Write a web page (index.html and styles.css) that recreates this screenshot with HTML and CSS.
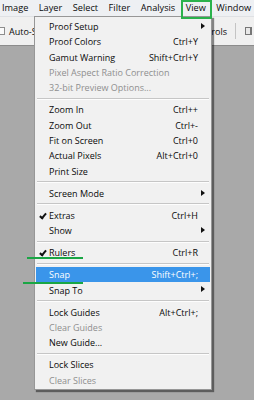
FILE: index.html
```html
<!DOCTYPE html>
<html lang="en">
<head>
    <meta charset="UTF-8">
    <title>View menu</title>
    <link rel="stylesheet" href="styles.css">
</head>
<body>

    <div class="menubar">
        <span class="menu-title">Image</span>
        <span class="menu-title">Layer</span>
        <span class="menu-title">Select</span>
        <span class="menu-title">Filter</span>
        <span class="menu-title">Analysis</span>
        <span class="menu-title active">View</span>
        <span class="menu-title">Window</span>
    </div>

    <div class="toolbar">
        <span class="check"></span>
        <span class="tool-label">Auto-S</span>
        <span class="tool-right">
            <span class="tool-label">trols</span>
            <span class="tool-sep"></span>
            <span class="tool-icon"></span>
        </span>
    </div>

    <div class="dropdown">
        <div class="item">Proof Setup<span class="arrow"></span></div>
        <div class="item">Proof Colors<span class="key">Ctrl+Y</span></div>
        <div class="item">Gamut Warning<span class="key">Shift+Ctrl+Y</span></div>
        <div class="item disabled">Pixel Aspect Ratio Correction</div>
        <div class="item disabled">32-bit Preview Options...</div>
        <div class="sep"></div>
        <div class="item">Zoom In<span class="key">Ctrl++</span></div>
        <div class="item">Zoom Out<span class="key">Ctrl+-</span></div>
        <div class="item">Fit on Screen<span class="key">Ctrl+0</span></div>
        <div class="item">Actual Pixels<span class="key">Alt+Ctrl+0</span></div>
        <div class="item">Print Size</div>
        <div class="sep"></div>
        <div class="item">Screen Mode<span class="arrow"></span></div>
        <div class="sep"></div>
        <div class="item checked">Extras<span class="key">Ctrl+H</span></div>
        <div class="item">Show<span class="arrow"></span></div>
        <div class="sep"></div>
        <div class="item checked">Rulers<span class="key">Ctrl+R</span></div>
        <div class="sep"></div>
        <div class="item hover">Snap<span class="key">Shift+Ctrl+;</span></div>
        <div class="item">Snap To<span class="arrow"></span></div>
        <div class="sep"></div>
        <div class="item">Lock Guides<span class="key">Alt+Ctrl+;</span></div>
        <div class="item disabled">Clear Guides</div>
        <div class="item">New Guide...</div>
        <div class="sep"></div>
        <div class="item">Lock Slices</div>
        <div class="item disabled">Clear Slices</div>
    </div>

    <div class="mark mark-rulers"></div>
    <div class="mark mark-snap"></div>

</body>
</html>
```

FILE: styles.css
```css
body {
    margin: 0;
    background-color: #a9a9a9;
    font-family: "Open Sans", "Liberation Sans", sans-serif;
    font-size: 9px;
    color: #0a0a0a;
    overflow: hidden;
}
.menubar {
    display: flex;
    gap: 10.5px;
    height: 16px;
    padding-left: 2px;
    background-color: #eef0f3;
    font-size: 9.2px;
    line-height: 16px;
    white-space: nowrap;
}
.menu-title {
    position: relative;
}
.menu-title.active::before {
    content: "";
    position: absolute;
    left: -4px;
    right: -4px;
    top: 2px;
    bottom: 1px;
    border: 1px solid #a2a7ae;
    border-radius: 2px;
    background-color: #e3e6eb;
    z-index: -1;
}
.menu-title.active::after {
    content: "";
    position: absolute;
    left: -5px;
    right: -6px;
    top: 0;
    height: 19px;
    border: 2px solid #2bb24c;
    box-sizing: border-box;
    z-index: 5;
}
.toolbar {
    display: flex;
    align-items: center;
    height: 28px;
    background-color: #f0f0f0;
    border-top: 1px solid #dfe1e4;
    border-bottom: 1px solid #8c8c8c;
    white-space: nowrap;
    overflow: hidden;
}
.check {
    width: 5px;
    height: 6px;
    margin-left: -2px;
    margin-right: 4px;
    border: 1px solid #8d8d8d;
    background-color: #fafafa;
}
.tool-right {
    display: flex;
    align-items: center;
    margin-left: auto;
}
.tool-sep {
    width: 1px;
    height: 16px;
    margin: 0 9px 0 8px;
    background-color: #c4c4c4;
}
.tool-icon {
    width: 4px;
    height: 6px;
    margin-right: 2px;
    border: 1px solid #777;
    border-right-width: 2px;
    background-color: #e8e8e8;
}
.dropdown {
    position: absolute;
    left: 34px;
    top: 16px;
    width: 176px;
    padding: 2px 0 1px;
    background-color: #f1f1f1;
    border: 1px solid #979797;
    box-shadow: 2px 2px 1px rgba(0, 0, 0, 0.45);
}
.item {
    position: relative;
    display: flex;
    align-items: center;
    height: 15.3px;
    margin: 0 1px;
    padding: 0 12px 0 13px;
    white-space: nowrap;
}
.key {
    margin-left: auto;
}
.arrow {
    position: absolute;
    right: 5px;
    top: 4px;
    border-left: 4px solid #111;
    border-top: 3.5px solid transparent;
    border-bottom: 3.5px solid transparent;
}
.disabled {
    color: #8f8f8f;
}
.checked::before {
    content: "";
    position: absolute;
    left: 5px;
    top: 4px;
    width: 2px;
    height: 5px;
    border-right: 2px solid #111;
    border-bottom: 2px solid #111;
    transform: rotate(40deg);
}
.hover {
    background-color: #3a95ea;
    color: #fff;
}
.sep {
    height: 2px;
    margin: 2.4px 2px;
    border-top: 1px solid #c6c6c6;
    border-bottom: 1px solid #fdfdfd;
    box-sizing: border-box;
}
.mark {
    position: absolute;
    height: 2px;
    background-color: #1aa645;
}
.mark-rulers {
    left: 27px;
    top: 257px;
    width: 56px;
}
.mark-snap {
    left: 23px;
    top: 282px;
    width: 60px;
}
```
